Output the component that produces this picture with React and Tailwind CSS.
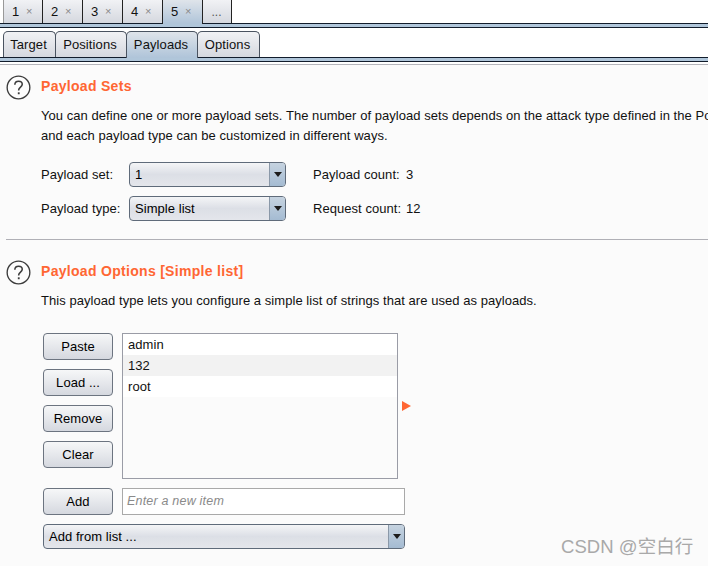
import { useState } from 'react';

const font = { fontFamily: '"Liberation Sans", Arial, sans-serif' };

const idleTab = 'bg-gradient-to-b from-[#f1f2f5] to-[#d5d8df]';
const activeTab = 'bg-gradient-to-b from-[#dfe4ea] to-[#afc4d9]';

function HelpIcon() {
  return (
    <svg width="25" height="25" viewBox="0 0 26 26" className="shrink-0">
      <circle cx="13" cy="13" r="11.8" fill="#fdfdfd" stroke="#3c3c3c" strokeWidth="1.4" />
      <path d="M9.2 10.2c0-2.3 1.7-3.7 3.9-3.7 2.2 0 3.8 1.3 3.8 3.2 0 2.7-3.7 3-3.7 5.9v.6" fill="none" stroke="#3c3c3c" strokeWidth="1.6" />
      <rect x="12.3" y="18" width="1.9" height="2" fill="#3c3c3c" />
    </svg>
  );
}

function Heading({ children }) {
  return <h2 className="pb-[3px] text-[14px] font-bold tracking-[0.3px] text-[#ff6633]">{children}</h2>;
}

function Combo({ label, className = '' }) {
  return (
    <div className={`flex overflow-hidden rounded-[4px] border border-[#5f6b7a] bg-gradient-to-b from-[#f4f5f7] via-[#dcdfe6] to-[#e4e6eb] ${className}`}>
      <div className="flex flex-1 items-center pl-[5px] text-[13px] tracking-[0.05px] text-black">{label}</div>
      <div className="flex w-[16px] items-center justify-center border-l border-[#8a98a8] bg-gradient-to-b from-[#c6d3e0] to-[#a4bbd2]">
        <svg width="8" height="5" viewBox="0 0 8 5"><path d="M0 0h8L4 5z" fill="#1c1c1c" /></svg>
      </div>
    </div>
  );
}

function Button({ children }) {
  return (
    <button className="flex h-[27px] w-[70px] items-center justify-center rounded-[4px] border border-[#6c7480] bg-gradient-to-b from-[#f6f7f8] via-[#e6e8ec] to-[#d5d8df] text-[13px] text-black">
      {children}
    </button>
  );
}

function Count({ label, value }) {
  return (
    <div className="flex pl-[27px]">
      <span className="w-[93px]">{label}</span>
      <span>{value}</span>
    </div>
  );
}

export default function App() {
  const [activeTop] = useState('5');
  const [activeSub] = useState('Payloads');

  return (
    <div style={font} className="relative h-[566px] w-[708px] overflow-hidden bg-[#fbfbfb] text-[13px] tracking-[0.05px] text-[#111]">
      {/* attack tabs */}
      <div className="bg-white">
        <div className="flex h-[23px] pl-[3px]">
          {['1', '2', '3', '4', '5'].map((t) => (
            <div
              key={t}
              className={`relative -ml-px flex w-[41px] items-center border-x border-[#222] pl-[8px] first:ml-0 first:w-[40px] first:border-l-[#999] ${t === activeTop ? `z-10 h-[24px] pb-px ${activeTab}` : `h-[23px] ${idleTab}`}`}
            >
              <span className="w-[14px]">{t}</span>
              <span className="text-[11px] text-[#888]">×</span>
            </div>
          ))}
          <div className={`-ml-px flex h-[23px] w-[30px] items-center justify-center border-r border-[#222] text-[12px] text-[#555] ${idleTab}`}>...</div>
        </div>
        <div className="h-[5px] border-y border-[#111c2b] bg-[#b0c6da]" />
      </div>

      {/* sub tabs */}
      <div className="bg-white pt-[3px]">
        <div className="flex h-[26px] pl-[3px]">
          {[
            ['Target', 'w-[53px]'],
            ['Positions', 'w-[72px]'],
            ['Payloads', 'w-[72px]'],
            ['Options', 'w-[63px]'],
          ].map(([t, w]) => (
            <div
              key={t}
              className={`relative -ml-px flex items-center justify-center rounded-t-[5px] border border-b-0 border-[#4a5360] pr-[2px] tracking-[0.1px] first:ml-0 ${w} ${t === activeSub ? `z-10 h-[27px] pb-px ${activeTab}` : `h-[26px] ${idleTab}`}`}
            >
              {t}
            </div>
          ))}
        </div>
        <div className="h-[5px] border-y border-[#111c2b] bg-[#b0c6da]" />
        <div className="h-[2px]" />
      </div>
      <div className="h-px bg-[#b5b5bb]" />

      {/* payload sets */}
      <div className="flex items-center gap-[10px] pt-[10px] pl-[6px]">
        <HelpIcon />
        <Heading>Payload Sets</Heading>
      </div>
      <div className="pt-[6px] pl-[41px] leading-[20px] whitespace-nowrap">
        <p>You can define one or more payload sets. The number of payload sets depends on the attack type defined in the Po</p>
        <p>and each payload type can be customized in different ways.</p>
      </div>
      <div className="grid grid-cols-[88px_157px_auto] items-center gap-y-[9px] pt-[16px] pl-[41px]">
        <span>Payload set:</span>
        <Combo label="1" className="h-[25px]" />
        <Count label="Payload count:" value="3" />
        <span>Payload type:</span>
        <Combo label="Simple list" className="h-[25px]" />
        <Count label="Request count:" value="12" />
      </div>
      <div className="mt-[18px] ml-[6px] h-px bg-[#b0b0b6]" />

      {/* payload options */}
      <div className="flex items-center gap-[10px] pt-[20px] pl-[6px]">
        <HelpIcon />
        <Heading>Payload Options [Simple list]</Heading>
      </div>
      <p className="pt-[6px] pl-[41px] leading-[20px] whitespace-nowrap">
        This payload type lets you configure a simple list of strings that are used as payloads.
      </p>

      <div className="flex pt-[22px] pl-[43px]">
        <div className="flex w-[79px] flex-col gap-[9px]">
          <Button>Paste</Button>
          <Button>Load ...</Button>
          <Button>Remove</Button>
          <Button>Clear</Button>
        </div>
        <div className="h-[146px] w-[276px] border border-[#9a9ca6] bg-[#fbfbfb]">
          {['admin', '132', 'root'].map((item, i) => (
            <div key={item} className={`flex h-[21px] items-center pl-[5px] ${i % 2 ? 'bg-[#f2f2f2]' : 'bg-white'}`}>
              {item}
            </div>
          ))}
        </div>
        <svg width="9" height="10" viewBox="0 0 9 10" className="mt-[68px] ml-[4px]"><path d="M0 0l9 5-9 5z" fill="#ff6633" /></svg>
      </div>

      <div className="flex pt-[9px] pl-[43px]">
        <div className="w-[79px]"><Button>Add</Button></div>
        <div className="flex h-[27px] w-[283px] items-center border border-[#a9a9a9] bg-white pl-[4px] text-[12.5px] tracking-[0.2px] text-[#8a8a8a] italic">
          Enter a new item
        </div>
      </div>
      <div className="pt-[9px] pl-[43px]">
        <Combo label="Add from list ..." className="h-[25px] w-[362px]" />
      </div>

      <div className="absolute top-[535px] left-[561px] text-[18.5px] leading-[24px] text-[#a9a9a9]" style={{ fontFamily: '"Liberation Sans", "Noto Sans CJK SC", sans-serif' }}>
        CSDN @空白行
      </div>
    </div>
  );
}
